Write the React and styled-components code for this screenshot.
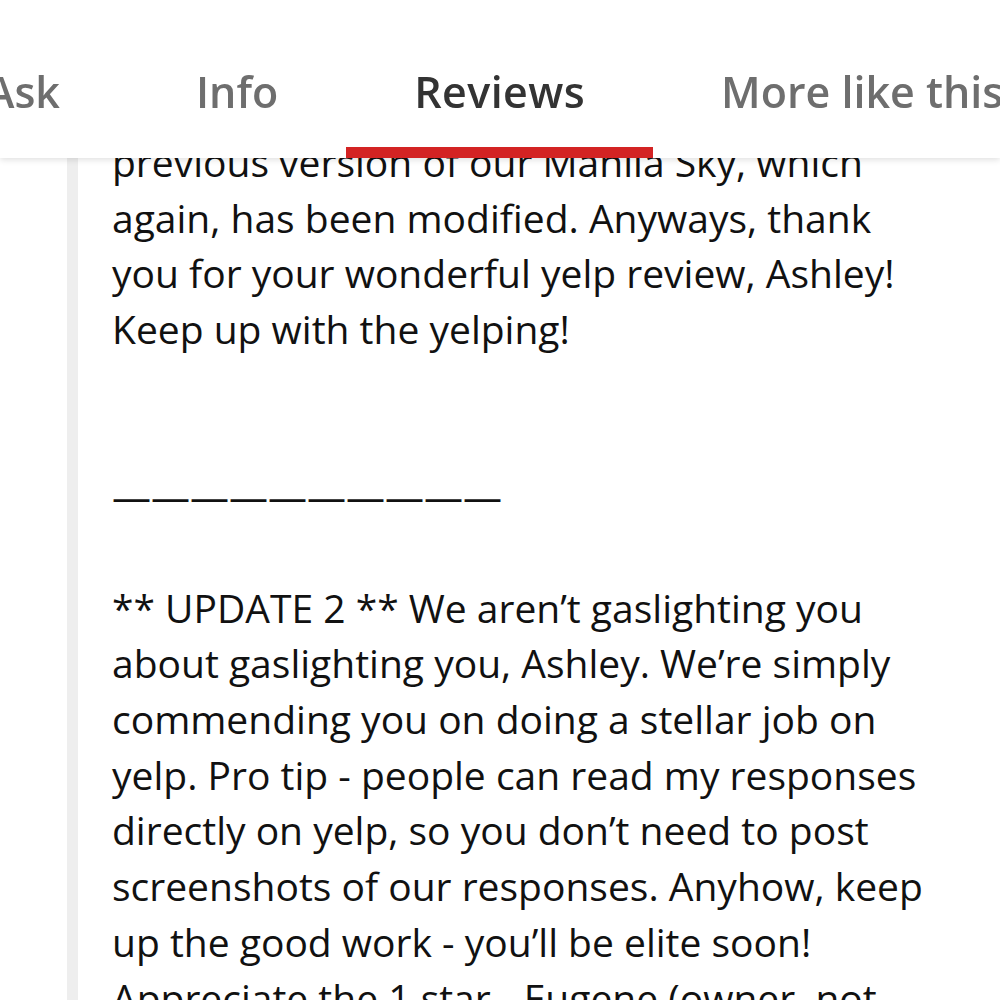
import React from "react";
import styled, { createGlobalStyle } from "styled-components";

const tabs = [
	{ label: "Ask" },
	{ label: "Info" },
	{ label: "Reviews", active: true },
	{ label: "More like this" },
];

const lines = [
	"previous version of our Manila Sky, which",
	"again, has been modified. Anyways, thank",
	"you for your wonderful yelp review, Ashley!",
	"Keep up with the yelping!",
	"",
	"",
	"——————————",
	"",
	"** UPDATE 2 ** We aren’t gaslighting you",
	"about gaslighting you, Ashley. We’re simply",
	"commending you on doing a stellar job on",
	"yelp. Pro tip - people can read my responses",
	"directly on yelp, so you don’t need to post",
	"screenshots of our responses. Anyhow, keep",
	"up the good work - you’ll be elite soon!",
	"Appreciate the 1 star. -Eugene (owner, not",
];

const App = () => {
	return (
		<>
			<GlobalStyle />
			<Header>
				<TabRow>
					{tabs.map((t) => (
						<Tab key={t.label} active={t.active}>
							{t.label}
						</Tab>
					))}
				</TabRow>
			</Header>
			<Page>
				<Quote>
					{lines.map((l, i) => (
						<Line key={i}>{l || "\u00a0"}</Line>
					))}
				</Quote>
			</Page>
		</>
	);
};

export default App;

const GlobalStyle = createGlobalStyle`
	html, body {
		margin: 0;
		padding: 0;
		background: #fff;
		overflow: hidden;
	}
	body {
		font-family: "Open Sans", "Noto Sans", sans-serif;
	}
`;

const Header = styled.div`
	position: fixed;
	top: 0;
	left: 0;
	right: 0;
	height: 158px;
	background: #fff;
	box-shadow: 0 2px 6px rgba(0, 0, 0, 0.12);
	overflow: hidden;
	z-index: 2;
`;

const TabRow = styled.div`
	display: flex;
	height: 100%;
	margin-left: -82px;
	white-space: nowrap;
`;

const Tab = styled.div`
	box-sizing: border-box;
	height: 100%;
	padding: 63px 68px 0;
	font-size: 43px;
	line-height: 58px;
	font-weight: 600;
	letter-spacing: ${({ active }) => (active ? "0.4px" : "0")};
	color: ${({ active }) => (active ? "#333333" : "#6e6e6e")};
	border-bottom: 11px solid ${({ active }) => (active ? "#d32323" : "transparent")};
`;

const Page = styled.div`
	height: 1000px;
	padding-left: 67px;
	overflow: hidden;
`;

const Quote = styled.div`
	height: 100%;
	box-sizing: border-box;
	border-left: 11px solid #eeeeee;
	padding: 134px 0 0 34px;
`;

const Line = styled.div`
	font-size: 39px;
	line-height: 55.7px;
	color: #111111;
	white-space: nowrap;
`;
